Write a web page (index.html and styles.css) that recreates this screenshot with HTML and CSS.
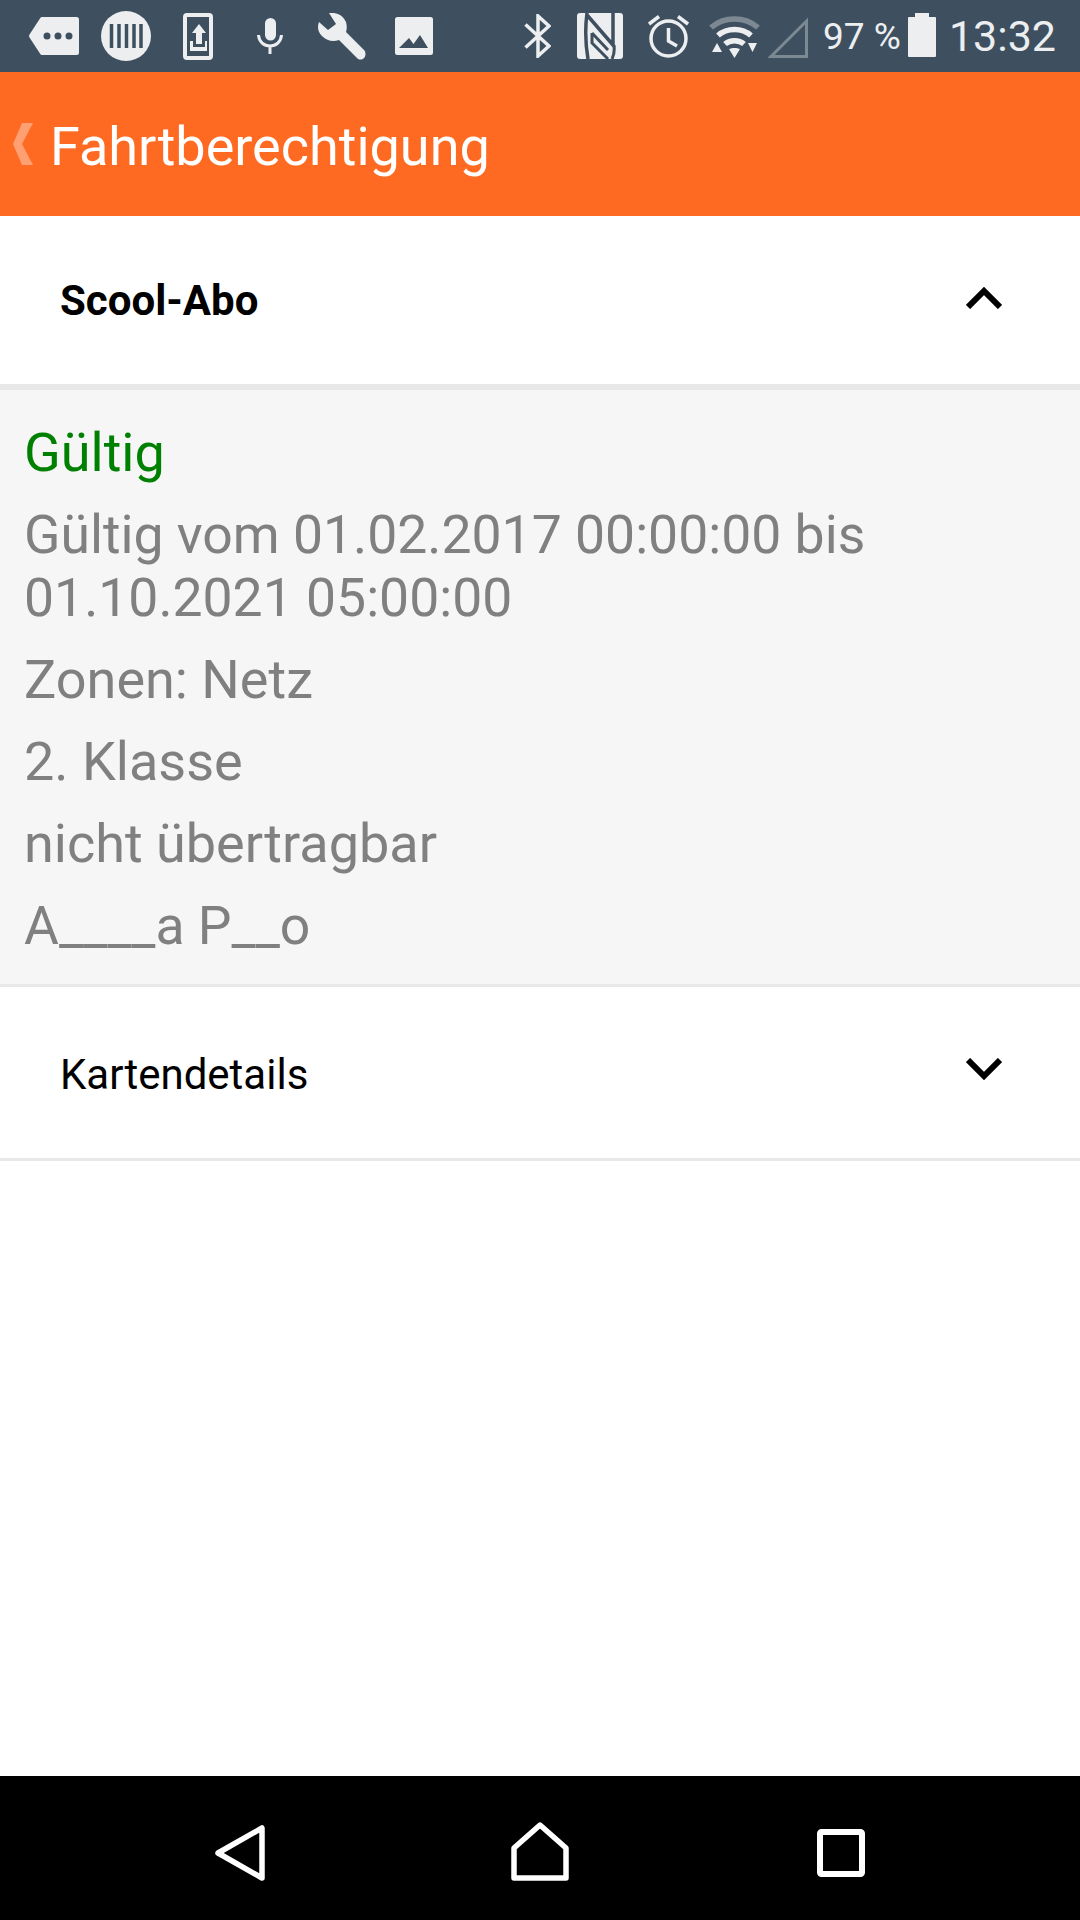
FILE: index.html
```html
<!DOCTYPE html>
<html lang="de">
<head>
<meta charset="utf-8">
<title>Fahrtberechtigung</title>
<link rel="stylesheet" href="styles.css">
</head>
<body>
<div class="screen">
  <div class="status">
    <div class="status-left">
      <svg class="ic i-tag" viewBox="0 0 50 38"><path fill="#eceef0" fill-rule="evenodd" d="M13 0H47.500a2.500 2.500 0 0 1 2.500 2.500V35.500a2.500 2.500 0 0 1-2.500 2.500H13a2 2 0 0 1-1.700-1L.5 20.500a3 3 0 0 1 0-3L11.300 1A2 2 0 0 1 13 0ZM18 15.500a3.500 3.500 0 1 0 0 7 3.500 3.500 0 0 0 0-7ZM29 15.500a3.500 3.500 0 1 0 0 7 3.500 3.500 0 0 0 0-7ZM40 15.500a3.500 3.500 0 1 0 0 7 3.500 3.500 0 0 0 0-7Z"/></svg>
      <svg class="ic i-bar" viewBox="0 0 50 50"><circle cx="25" cy="25" r="25" fill="#eceef0"/><path stroke="#3e5060" stroke-width="3.500" d="M10.500 13V37M18 13V37M25.500 13V37M33 13V37M40 13V37"/></svg>
      <svg class="ic i-up" viewBox="0 0 30 47"><rect x="2" y="2" width="26" height="43" rx="2" fill="none" stroke="#eceef0" stroke-width="4"/><path fill="#eceef0" d="M16 11 23 20H19V31H13V20H9ZM7 28H10V34H22V28H24V38H7Z"/></svg>
      <svg class="ic i-mic" viewBox="0 0 26 36"><path fill="#eceef0" d="M13.500 0a5.500 5.500 0 0 1 5.500 5.500V17a5.500 5.500 0 0 1-11 0V5.500A5.500 5.500 0 0 1 13.500 0Z"/><path fill="none" stroke="#eceef0" stroke-width="3" d="M1.500 17C2 24 7 28 13 28S24 24 24.500 17M13 28V36"/></svg>
      <svg class="ic i-wr" viewBox="0 0 48 47"><path fill="#eceef0" d="M11 0C18-1 25 2 28 9 29 13 29 16 28 19L46 37C48 39 48 43 46 45S41 47 39 45L21 27C15 29 9 28 4 23 0 19-1 14 1 9L10 17 18 11Z"/></svg>
      <svg class="ic i-img" viewBox="0 0 38 38"><path fill="#eceef0" fill-rule="evenodd" d="M2.500 0H35.500a2.500 2.500 0 0 1 2.500 2.500V35.500a2.500 2.500 0 0 1-2.500 2.500H2.500a2.500 2.500 0 0 1-2.500-2.500V2.500a2.500 2.500 0 0 1 2.500-2.500ZM4 31H33L25 18 18.500 27 14 21Z"/></svg>
    </div>
    <div class="status-right">
      <svg class="ic i-bt" viewBox="0 0 27 44"><path fill="none" stroke="#eceef0" stroke-width="3.500" d="M1.500 10.500 25 32 14 42V2L25 12 1.500 33.500"/></svg>
      <svg class="ic i-nfc" viewBox="0 0 46 46"><rect width="46" height="46" rx="3" fill="#eceef0"/><path fill="none" stroke="#3e5060" stroke-width="3.500" d="M10 0Q7 23 11 46M36 0V32L10 2"/><path fill="none" stroke="#3e5060" stroke-width="3" d="M15 20V30L31 46M15 20 31 37M37 32Q38 40 35 46"/></svg>
      <svg class="ic i-al" viewBox="0 0 41 43"><circle cx="20.500" cy="23.500" r="17.500" fill="none" stroke="#eceef0" stroke-width="3.500"/><path fill="none" stroke="#eceef0" stroke-width="3.500" d="M20.500 13V26L29 31M1 9 11 1.500M40 9 30 1.500"/></svg>
      <svg class="ic i-wifi" viewBox="0 0 51 42"><path fill="none" stroke="#7c8993" stroke-width="5.500" d="M2 11.500C15 0 36 0 49 11.500"/><path fill="none" stroke="#eceef0" stroke-width="5.500" d="M9 19.500C18 11.500 33 11.500 42 19.500M16 28C21 23.500 30 23.500 35 28"/><path fill="#eceef0" d="M25.500 42 20 33C23 31.500 28 31.500 31 33ZM8 27 13 36H3ZM39 27H48L43.500 36Z"/></svg>
      <svg class="ic i-sig" viewBox="0 0 41 41"><path fill="none" stroke="#7c8993" stroke-width="3" d="M39.500 4V39.500H4Z"/></svg>
      <span class="batt-text">97 %</span>
      <svg class="ic i-bat" viewBox="0 0 28 44"><path fill="#eceef0" d="M7 0H21V4H27a1 1 0 0 1 1 1V43a1 1 0 0 1-1 1H1a1 1 0 0 1-1-1V5a1 1 0 0 1 1-1H7Z"/></svg>
      <span class="clock">13:32</span>
    </div>
  </div>
  <header class="bar">
    <svg class="back" viewBox="0 0 20 42"><path fill="#ffa073" d="M9 0H20L9 21 20 42H9L0 21Z"/></svg>
    <h1 class="title">Fahrtberechtigung</h1>
  </header>
  <main class="content">
    <div class="row row-main">
      <span class="strong">Scool-Abo</span>
      <svg class="chev" viewBox="0 0 36 22"><path fill="none" stroke="#000" stroke-width="6" d="M2 20 18 4 34 20"/></svg>
    </div>
    <section class="panel">
      <p class="line valid">Gültig</p>
      <p class="line line-narrow">Gültig vom 01.02.2017 00:00:00 bis<br>01.10.2021 05:00:00</p>
      <p class="line">Zonen: Netz</p>
      <p class="line">2. Klasse</p>
      <p class="line">nicht übertragbar</p>
      <p class="line line-narrow">A____a P__o</p>
    </section>
    <div class="row row-sub">
      <span class="sub-label">Kartendetails</span>
      <svg class="chev chev-down" viewBox="0 0 36 22"><path fill="none" stroke="#000" stroke-width="6" d="M2 2 18 18 34 2"/></svg>
    </div>
  </main>
  <nav class="nav">
    <svg class="nav-back" viewBox="0 0 50 56"><path fill="none" stroke="#fff" stroke-width="5.500" stroke-linejoin="round" d="M47 3V53L3 28Z"/></svg>
    <svg class="nav-home" viewBox="0 0 58 59"><path fill="none" stroke="#fff" stroke-width="5.500" stroke-linejoin="round" d="M29 3 55 26V56H3V26Z"/></svg>
    <svg class="nav-sq" viewBox="0 0 48 48"><rect x="3" y="3" width="42" height="42" rx="1.500" fill="none" stroke="#fff" stroke-width="6"/></svg>
  </nav>
</div>
</body>
</html>
```
FILE: styles.css
```css
* { box-sizing: border-box; }
html, body { margin: 0; padding: 0; }
body { width: 1080px; height: 1920px; overflow: hidden; background: #fff; font-family: Roboto, "Liberation Sans", sans-serif; }
.screen { width: 1080px; height: 1920px; display: flex; flex-direction: column; }
.status { height: 72px; background: #3e5060; display: flex; align-items: center; justify-content: space-between; padding: 0 24px 0 29px; color: #eceef0; flex: none; }
.status-left, .status-right { display: flex; align-items: center; }
.ic { display: block; flex: none; }
.i-tag { width: 50px; height: 38px; }
.i-bar { width: 50px; height: 50px; margin-left: 22px; }
.i-up { width: 30px; height: 47px; margin-left: 32px; }
.i-mic { width: 26px; height: 36px; margin-left: 44px; }
.i-wr { width: 48px; height: 47px; margin-left: 35px; }
.i-img { width: 38px; height: 38px; margin-left: 29px; }
.i-bt { width: 27px; height: 44px; }
.i-nfc { width: 46px; height: 46px; margin-left: 26px; }
.i-al { width: 41px; height: 43px; margin-left: 25px; margin-top: 1px; }
.i-wifi { width: 51px; height: 42px; margin-left: 20px; margin-top: 2px; }
.i-sig { width: 41px; height: 41px; margin-left: 7px; margin-top: 3px; }
.batt-text { font-size: 37px; margin-left: 15px; }
.i-bat { width: 28px; height: 44px; margin-left: 7px; margin-top: -2px; }
.clock { font-size: 43px; margin-left: 13px; }
.bar { height: 144px; background: #ff6a23; display: flex; align-items: center; padding-left: 13px; flex: none; }
.back { width: 20px; height: 42px; }
.title { margin: 5px 0 0 17px; font-size: 54px; font-weight: 400; color: #fff; line-height: 1; }
.content { flex: 1; display: flex; flex-direction: column; }
.row { display: flex; align-items: center; justify-content: space-between; padding: 0 78px 0 60px; background: #fff; color: #000; font-size: 42px; }
.row-main { height: 174px; border-bottom: 6px solid #e8e8e8; }
.row-sub { height: 174px; border-bottom: 3px solid #e8e8e8; }
.strong { font-weight: 700; }
.sub-label { margin-top: 4px; }
.chev { width: 36px; height: 22px; }
.row-main .chev { margin-top: -4px; }
.chev-down { margin-top: -8px; }
.panel { height: 597px; background: #f6f6f6; border-bottom: 3px solid #e8e8e8; padding: 31px 24px 0; }
.line { margin: 0 0 19px; font-size: 54px; line-height: 63px; color: #808080; }
.line-narrow { font-size: 53.500px; }
.valid { color: #008000; }
.nav { height: 144px; background: #000; flex: none; position: relative; }
.nav-back { position: absolute; left: 215px; top: 49px; width: 50px; height: 56px; }
.nav-home { position: absolute; left: 511px; top: 46px; width: 58px; height: 59px; }
.nav-sq { position: absolute; left: 817px; top: 53px; width: 48px; height: 48px; }
```
